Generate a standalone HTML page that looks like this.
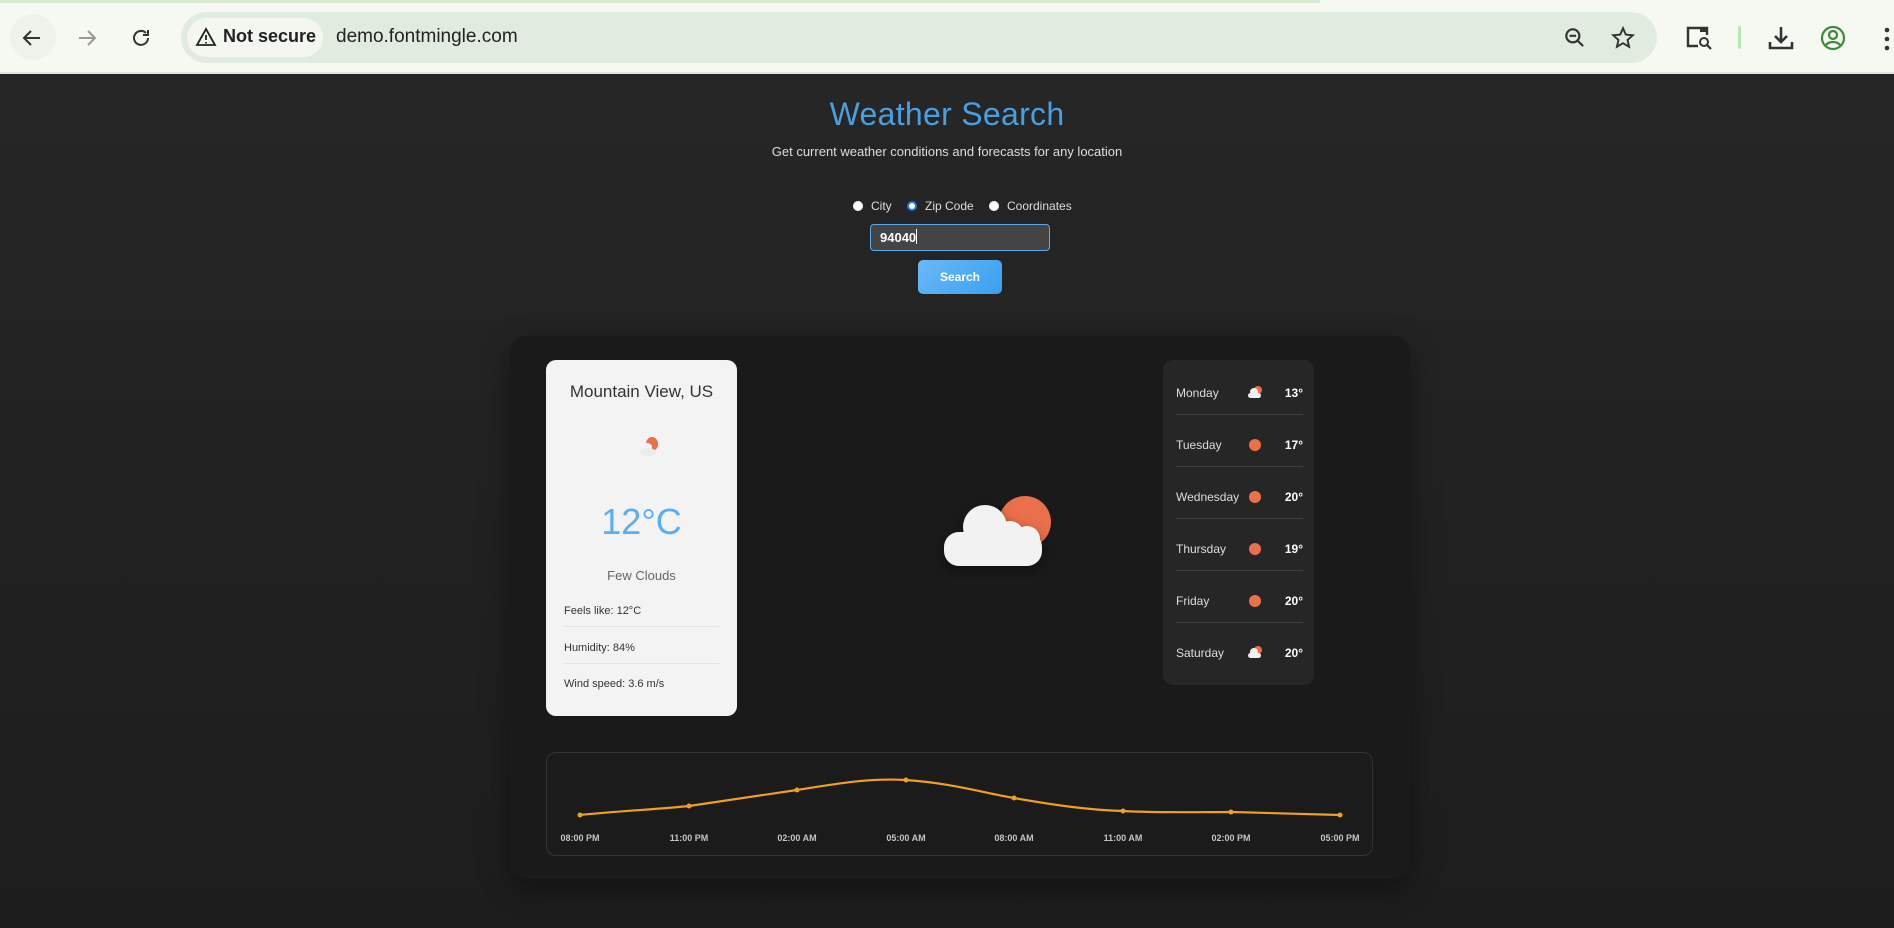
<!DOCTYPE html>
<html><head><meta charset="utf-8"><style>
*{margin:0;padding:0;box-sizing:border-box}
body{width:1894px;height:928px;overflow:hidden;font-family:"Liberation Sans",sans-serif;background:#f6f9f1;position:relative}
.abs{position:absolute}
#chrome{left:0;top:0;width:1894px;height:74px;background:#f6f9f1}
#page{left:0;top:74px;width:1894px;height:854px;background:linear-gradient(#262626,#1d1d1d)}
.t{position:absolute;white-space:nowrap}
</style></head><body>
<div class="abs" id="chrome">
 <div class="abs" style="left:0;top:0;width:1320px;height:3px;background:#d9e8d3"></div>
 <div class="abs" style="left:10px;top:14px;width:46px;height:46px;border-radius:23px;background:#eef2ea"></div>
 <svg class="abs" style="left:20px;top:26px" width="24" height="24" viewBox="0 0 24 24"><path d="M20 12H5M11 5l-7 7 7 7" stroke="#333" stroke-width="2" fill="none"/></svg>
 <svg class="abs" style="left:75px;top:26px" width="24" height="24" viewBox="0 0 24 24"><path d="M4 12h15M13 5l7 7-7 7" stroke="#999" stroke-width="2" fill="none"/></svg>
 <svg class="abs" style="left:129px;top:26px" width="24" height="24" viewBox="0 0 24 24"><path d="M19 12a7 7 0 1 1-2-5M19 4v5h-5" stroke="#333" stroke-width="2" fill="none"/></svg>
 <div class="abs" style="left:181px;top:12px;width:1476px;height:51px;border-radius:26px;background:#e2ebe0"></div>
 <div class="abs" style="left:187px;top:18px;width:136px;height:39px;border-radius:20px;background:#f3f7f0"></div>
 <svg class="abs" style="left:195px;top:27px" width="22" height="20" viewBox="0 0 22 20"><path d="M11 2L20 18H2Z" stroke="#222" stroke-width="1.8" fill="none"/><path d="M11 8v5M11 15v1.5" stroke="#222" stroke-width="1.8"/></svg>
 <div class="t" style="left:223px;top:26px;font-size:18px;font-weight:bold;color:#222">Not secure</div>
 <div class="t" style="left:336px;top:26px;font-size:19px;color:#222">demo.fontmingle.com</div>
 <svg class="abs" style="left:1562px;top:25px" width="26" height="26" viewBox="0 0 24 24"><circle cx="10" cy="10" r="6" stroke="#333" stroke-width="2" fill="none"/><path d="M7 10h6M14.5 14.5l5 5" stroke="#333" stroke-width="2"/></svg>
 <svg class="abs" style="left:1610px;top:25px" width="26" height="26" viewBox="0 0 24 24"><path d="M12 3l2.6 5.9 6.4.6-4.8 4.3 1.4 6.3L12 16.8 6.4 20.1l1.4-6.3L3 9.5l6.4-.6z" stroke="#333" stroke-width="1.8" fill="none"/></svg>
 <svg class="abs" style="left:1686px;top:25px" width="28" height="26" viewBox="0 0 28 26"><path d="M12 21H2V3h19v7" stroke="#333" stroke-width="2.4" fill="none"/><rect x="14" y="3" width="7" height="4" fill="#333"/><circle cx="18" cy="17" r="4" stroke="#333" stroke-width="2" fill="none"/><path d="M21 20l4 4" stroke="#333" stroke-width="2.2"/></svg>
 <div class="abs" style="left:1738px;top:26px;width:3px;height:23px;background:#b9e6b0;border-radius:2px"></div>
 <svg class="abs" style="left:1767px;top:24px" width="28" height="28" viewBox="0 0 28 28"><path d="M14 3v15M8 12l6 6 6-6M3 18v6h22v-6" stroke="#333" stroke-width="2.6" fill="none"/></svg>
 <svg class="abs" style="left:1820px;top:25px" width="26" height="26" viewBox="0 0 26 26"><circle cx="13" cy="13" r="11" stroke="#3d8a3a" stroke-width="2.2" fill="none"/><circle cx="13" cy="10" r="4" stroke="#3d8a3a" stroke-width="2.2" fill="none"/><path d="M6 20c3-4 11-4 14 0" stroke="#3d8a3a" stroke-width="2.2" fill="none"/></svg>
 <svg class="abs" style="left:1882px;top:26px" width="10" height="26" viewBox="0 0 10 26"><circle cx="5" cy="4" r="2.3" fill="#333"/><circle cx="5" cy="13" r="2.3" fill="#333"/><circle cx="5" cy="22" r="2.3" fill="#333"/></svg>
 <div class="abs" style="left:0;top:72px;width:1894px;height:2px;background:#dfe5da"></div>
</div>

<div class="abs" id="page"></div>

<div class="t" style="left:0;width:1894px;text-align:center;top:96px;font-size:32px;color:#4a9fe0;letter-spacing:0.3px">Weather Search</div>
<div class="t" style="left:0;width:1894px;text-align:center;top:144px;font-size:13px;color:#ddd">Get current weather conditions and forecasts for any location</div>

<div class="abs" style="left:853px;top:201px;width:10px;height:10px;border-radius:50%;background:#fff"></div>
<div class="t" style="left:871px;top:199px;font-size:12px;color:#ddd">City</div>
<div class="abs" style="left:907px;top:201px;width:10px;height:10px;border-radius:50%;background:#fff;border:2.5px solid #1a73e8"></div>
<div class="t" style="left:925px;top:199px;font-size:12px;color:#ddd">Zip Code</div>
<div class="abs" style="left:989px;top:201px;width:10px;height:10px;border-radius:50%;background:#fff"></div>
<div class="t" style="left:1007px;top:199px;font-size:12px;color:#ddd">Coordinates</div>

<div class="abs" style="left:870px;top:224px;width:180px;height:27px;border:1px solid #5aa9e6;border-radius:4px;background:#444"></div>
<div class="t" style="left:880px;top:229px;font-size:13px;font-weight:bold;color:#fff">94040<span style="display:inline-block;width:1px;height:15px;background:#fff;vertical-align:-2px"></span></div>
<div class="abs" style="left:918px;top:260px;width:84px;height:34px;border-radius:5px;background:linear-gradient(135deg,#6bb9f7,#3a9ff0);color:#fff;font-size:12px;font-weight:bold;text-align:center;line-height:34px">Search</div>

<div class="abs" style="left:510px;top:336px;width:900px;height:543px;border-radius:16px;background:#1a1a1a;box-shadow:0 10px 30px rgba(0,0,0,.4)"></div>

<!-- left card -->
<div class="abs" style="left:546px;top:360px;width:191px;height:356px;border-radius:10px;background:#f3f3f3"></div>
<div class="t" style="left:546px;width:191px;text-align:center;top:382px;font-size:17px;color:#333">Mountain View, US</div>
<svg class="abs" style="left:635px;top:432px" width="30" height="26" viewBox="0 0 30 26"><ellipse cx="17" cy="12" rx="6" ry="7" fill="#e8704c"/><ellipse cx="12" cy="15" rx="5" ry="4" fill="#f3f3f3"/><ellipse cx="13" cy="20" rx="8" ry="4" fill="#ececec"/></svg>
<div class="t" style="left:546px;width:191px;text-align:center;top:501px;font-size:36px;color:#5aaef5">12°C</div>
<div class="t" style="left:546px;width:191px;text-align:center;top:568px;font-size:13px;color:#666">Few Clouds</div>
<div class="t" style="left:564px;top:605px;font-size:11px;color:#333">Feels like: 12°C</div>
<div class="abs" style="left:564px;top:626px;width:155px;height:1px;background:#e4e4e4"></div>
<div class="t" style="left:564px;top:642px;font-size:11px;color:#333">Humidity: 84%</div>
<div class="abs" style="left:564px;top:663px;width:155px;height:1px;background:#e4e4e4"></div>
<div class="t" style="left:564px;top:678px;font-size:11px;color:#333">Wind speed: 3.6 m/s</div>

<!-- center icon -->
<svg class="abs" style="left:930px;top:485px" width="130" height="95" viewBox="930 485 130 95"><circle cx="1025" cy="522" r="26" fill="#ea704c"/><g fill="#f2f2f2" style="filter:drop-shadow(0 4px 6px rgba(0,0,0,.4))"><circle cx="985" cy="527" r="22"/><circle cx="1027" cy="539" r="13"/><rect x="944" y="532" width="98" height="34" rx="15"/><circle cx="1010" cy="535" r="14"/></g></svg>

<!-- forecast -->
<div class="abs" style="left:1163px;top:360px;width:151px;height:325px;border-radius:10px;background:#262626"></div>
<div class="t" style="left:1176px;top:386px;font-size:12px;color:#ddd">Monday</div>
<div class="t" style="left:1176px;top:438px;font-size:12px;color:#ddd">Tuesday</div>
<div class="t" style="left:1176px;top:490px;font-size:12px;color:#ddd">Wednesday</div>
<div class="t" style="left:1176px;top:542px;font-size:12px;color:#ddd">Thursday</div>
<div class="t" style="left:1176px;top:594px;font-size:12px;color:#ddd">Friday</div>
<div class="t" style="left:1176px;top:646px;font-size:12px;color:#ddd">Saturday</div>
<div class="t" style="left:1253px;width:50px;text-align:right;top:386px;font-size:12px;font-weight:bold;color:#fff">13°</div>
<div class="t" style="left:1253px;width:50px;text-align:right;top:438px;font-size:12px;font-weight:bold;color:#fff">17°</div>
<div class="t" style="left:1253px;width:50px;text-align:right;top:490px;font-size:12px;font-weight:bold;color:#fff">20°</div>
<div class="t" style="left:1253px;width:50px;text-align:right;top:542px;font-size:12px;font-weight:bold;color:#fff">19°</div>
<div class="t" style="left:1253px;width:50px;text-align:right;top:594px;font-size:12px;font-weight:bold;color:#fff">20°</div>
<div class="t" style="left:1253px;width:50px;text-align:right;top:646px;font-size:12px;font-weight:bold;color:#fff">20°</div>
<svg class="abs" style="left:1246px;top:385px" width="18" height="14" viewBox="0 0 18 14"><circle cx="12" cy="5" r="4" fill="#ea704c"/><circle cx="8" cy="7" r="4" fill="#f2f2f2"/><rect x="2" y="8" width="13" height="5" rx="2.5" fill="#f2f2f2"/></svg>
<svg class="abs" style="left:1246px;top:645px" width="18" height="14" viewBox="0 0 18 14"><circle cx="12" cy="5" r="4" fill="#ea704c"/><circle cx="8" cy="7" r="4" fill="#f2f2f2"/><rect x="2" y="8" width="13" height="5" rx="2.5" fill="#f2f2f2"/></svg>
<div class="abs" style="left:1249px;top:439px;width:12px;height:12px;border-radius:50%;background:#ea704c"></div>
<div class="abs" style="left:1249px;top:491px;width:12px;height:12px;border-radius:50%;background:#ea704c"></div>
<div class="abs" style="left:1249px;top:543px;width:12px;height:12px;border-radius:50%;background:#ea704c"></div>
<div class="abs" style="left:1249px;top:595px;width:12px;height:12px;border-radius:50%;background:#ea704c"></div>
<div class="abs" style="left:1176px;top:414px;width:127px;height:1px;background:#3c3c3c"></div>
<div class="abs" style="left:1176px;top:466px;width:127px;height:1px;background:#3c3c3c"></div>
<div class="abs" style="left:1176px;top:518px;width:127px;height:1px;background:#3c3c3c"></div>
<div class="abs" style="left:1176px;top:570px;width:127px;height:1px;background:#3c3c3c"></div>
<div class="abs" style="left:1176px;top:622px;width:127px;height:1px;background:#3c3c3c"></div>

<!-- chart -->
<div class="abs" style="left:546px;top:752px;width:827px;height:104px;border-radius:10px;border:1px solid #333;background:#1b1b1b"></div>
<svg class="abs" style="left:0;top:0" width="1894" height="928">
<path d="M580 815 C620 811 660 809 689 806 C730 800 765 795 797 790 C840 783 870 778 906 780 C950 783 980 792 1014 798 C1060 806 1090 810 1123 811 C1160 813 1200 812 1231 812 C1270 813 1310 814 1340 815" stroke="#f0a020" stroke-width="2.2" fill="none"/>
<g fill="#f0a020"><circle cx="580" cy="815" r="2.5"/><circle cx="689" cy="806" r="2.5"/><circle cx="797" cy="790" r="2.5"/><circle cx="906" cy="780" r="2.5"/><circle cx="1014" cy="798" r="2.5"/><circle cx="1123" cy="811" r="2.5"/><circle cx="1231" cy="812" r="2.5"/><circle cx="1340" cy="815" r="2.5"/></g>
<g fill="#c4c4c4" font-family="Liberation Sans, sans-serif" font-size="9" font-weight="bold" text-anchor="middle"><text x="580" y="841">08:00 PM</text><text x="689" y="841">11:00 PM</text><text x="797" y="841">02:00 AM</text><text x="906" y="841">05:00 AM</text><text x="1014" y="841">08:00 AM</text><text x="1123" y="841">11:00 AM</text><text x="1231" y="841">02:00 PM</text><text x="1340" y="841">05:00 PM</text></g>
</svg>
</body></html>
